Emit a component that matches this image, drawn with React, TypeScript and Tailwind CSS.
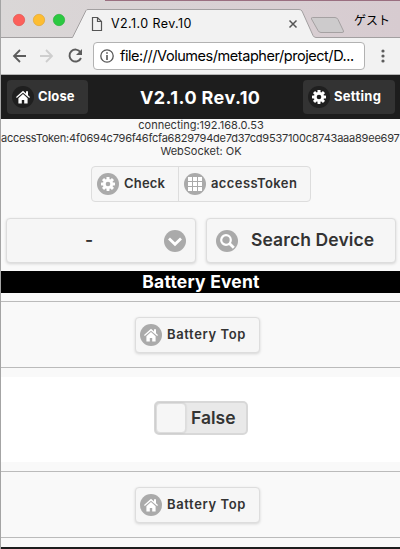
import React from "react";

function HomeIcon() {
  return (
    <svg width="14" height="14" viewBox="0 0 14 14" fill="currentColor">
      <path d="M7 4 2.4 8.2V13.4h3.4V10h2.4v3.4h3.4V8.2Z" />
      <path d="M7 .8 0 7l.8 1L7 2.7 13.2 8l.8-1-2-1.8V1.2h-2v2.2Z" />
    </svg>
  );
}

function GearIcon() {
  return (
    <svg width="14" height="14" viewBox="-7 -7 14 14">
      <g fill="currentColor">
        {[0, 45, 90, 135].map((a) => (
          <rect key={a} x="-1.5" y="-7" width="3" height="14" rx=".4" transform={`rotate(${a})`} />
        ))}
      </g>
      <circle r="3.7" fill="none" stroke="currentColor" strokeWidth="2.8" />
      <circle r="2.3" className="fill-[var(--disc)]" />
    </svg>
  );
}

function GridIcon() {
  return (
    <svg width="14" height="14" viewBox="0 0 14 14" fill="currentColor">
      {[0, 5, 10].map((y) => [0, 5, 10].map((x) => <rect key={`${x}-${y}`} x={x} y={y} width="4" height="4" />))}
    </svg>
  );
}

function Disc({ dark = false, children }: { dark?: boolean; children: React.ReactNode }) {
  return (
    <span
      className={`flex size-[22px] shrink-0 items-center justify-center rounded-full text-white ${
        dark ? "bg-[#1f1f1f] [--disc:#1f1f1f]" : "bg-[#aaaaaa] [--disc:#aaaaaa]"
      }`}
    >
      {children}
    </span>
  );
}

function BatterySection() {
  return (
    <section className="flex h-[67px] items-start justify-center border-y border-[#bbbbbb] pt-[15px] pr-[6px]">
      <button className="flex h-9 w-[125px] items-center rounded-[4px] border border-[#dddddd] bg-[#f6f6f6] pl-1 shadow-[0_1px_3px_rgba(0,0,0,0.15)]">
        <Disc><HomeIcon /></Disc>
        <span className="ml-[5px] text-[13px] font-semibold tracking-[0.62px] whitespace-nowrap">Battery Top</span>
      </button>
    </section>
  );
}

function Browser() {
  return (
    <>
      <div className="relative h-[38px] bg-gradient-to-r from-[#dad7d7] to-[#d7cbd0]">
        <svg className="absolute inset-0" width="400" height="38">
          <path d="M105 0H400V1H105Z" fill="#9a6f80" />
          <path d="M0 37.5H72.5L86 10.5Q86.5 9.5 88 9.5H299Q301 9.5 302 11L313 35.5Q314 37.5 316 37.5H400V38H0Z" fill="#f2f2f2" />
          <path d="M0 37.5H72.5L86 10.5Q86.5 9.5 88 9.5H299Q301 9.5 302 11L313 35.5Q314 37.5 316 37.5H400" fill="none" stroke="#a3a0a1" />
          <path d="M312.5 17.5H335Q337 17.5 338 19.5L343.5 31Q344 32.5 342 32.5H321Q319 32.5 318 30.5L311.5 19Q311 17.5 312.5 17.5Z" fill="#cdcbcc" stroke="#a5a1a2" />
          <circle cx="19" cy="20" r="5.7" fill="#fc605b" stroke="#df4a45" strokeWidth=".6" />
          <circle cx="39" cy="20" r="5.7" fill="#fdbd32" stroke="#dfa128" strokeWidth=".6" />
          <circle cx="59" cy="20" r="5.7" fill="#2bc941" stroke="#22ab33" strokeWidth=".6" />
          <path d="M92.5 17.5h5l4 4v9h-9Zm5 0v4h4" fill="none" stroke="#555" strokeWidth="1.2" />
          <path d="m289.5 20.5 7 7m0-7-7 7" stroke="#555" strokeWidth="1.5" />
        </svg>
        <span className="absolute top-[14px] left-[111px] text-[12.5px] leading-5 tracking-[0.42px] whitespace-nowrap">V2.1.0 Rev.10</span>
        <span className="absolute top-[10px] left-[354px] font-['Noto_Sans_CJK_JP',sans-serif] text-[12px] leading-5 whitespace-nowrap">ゲスト</span>
      </div>
      <div className="flex h-[37px] items-center border-b border-[#b5b5b5] bg-[#f2f2f2] pl-[12px]">
        <svg width="15" height="16" viewBox="0 0 15 16" fill="none" stroke="#5c5c5c" strokeWidth="1.8"><path d="M14 8H2m6-6L2 8l6 6" /></svg>
        <svg className="ml-[13px]" width="15" height="16" viewBox="0 0 15 16" fill="none" stroke="#cecece" strokeWidth="1.8"><path d="M0 8h12M6 2l6 6-6 6" /></svg>
        <svg className="ml-[13px]" width="15" height="16" viewBox="0 0 15 16" fill="none" stroke="#5c5c5c" strokeWidth="1.9">
          <path d="M12.5 4.2A6 6 0 1 0 13 10" />
          <path d="M14 1v6H8Z" fill="#5c5c5c" stroke="none" />
        </svg>
        <div className="ml-[10px] flex h-7 w-[272px] items-center rounded-[4px] border border-[#b2b2b2] bg-white pl-[6px]">
          <svg className="shrink-0" width="14" height="14" viewBox="0 0 14 14"><circle cx="7" cy="7" r="6.2" fill="none" stroke="#555" strokeWidth="1.3" /><path d="M7 6v5M7 3.2v1.5" stroke="#555" strokeWidth="1.6" /></svg>
          <span className="ml-[6px] text-[14.5px] tracking-[-0.45px] whitespace-nowrap">file:///Volumes/metapher/project/D...</span>
        </div>
        <svg className="ml-[16px]" width="4" height="14" fill="#5c5c5c"><circle cx="2" cy="2" r="1.6" /><circle cx="2" cy="7" r="1.6" /><circle cx="2" cy="12" r="1.6" /></svg>
      </div>
    </>
  );
}

export default function App() {
  return (
    <div className="flex h-[549px] w-[400px] overflow-hidden bg-[#f9f9f9] font-['Inter','Liberation_Sans',sans-serif] text-[#333333]">
      <div className="w-px shrink-0 bg-[#a4a4a4]" />
      <main className="w-[399px] shrink-0 overflow-hidden">
        <div className="-ml-px text-black"><Browser /></div>
        <header className="flex h-11 items-center bg-[#1d1d1d] pl-[6px] font-bold text-white">
          <button className="flex h-[34px] w-[81px] items-center rounded-[4px] bg-[#333333] pl-[5px]">
            <Disc dark><HomeIcon /></Disc>
            <span className="ml-1 text-[13px] tracking-[0.1px]">Close</span>
          </button>
          <h1 className="ml-[52px] w-[121px] text-[18px] tracking-[0.4px] whitespace-nowrap">V2.1.0 Rev.10</h1>
          <button className="ml-[42px] flex h-[34px] w-[92px] items-center rounded-[4px] bg-[#333333] pl-[5px]">
            <Disc dark><GearIcon /></Disc>
            <span className="ml-1 text-[13px] tracking-[0.3px]">Setting</span>
          </button>
        </header>
        <div className="h-[47px] text-center text-[11px] leading-[13px] whitespace-nowrap">
          <p className="pl-px">connecting:192.168.0.53</p>
          <p className="text-left tracking-[-0.22px]">accessToken:4f0694c796f46fcfa6829794de7d37cd9537100c8743aaa89ee697</p>
          <p className="pl-px">WebSocket: OK</p>
        </div>
        <div className="ml-[90px] flex h-9 w-[220px] overflow-hidden rounded-[4px] border border-[#dddddd] bg-[#f6f6f6] text-[13px] font-semibold">
          <button className="flex w-[87px] items-center border-r border-[#dddddd] pl-[5px]">
            <Disc><GearIcon /></Disc><span className="ml-[5px] tracking-[0.2px]">Check</span>
          </button>
          <button className="flex flex-1 items-center pl-[5px]">
            <Disc><GridIcon /></Disc><span className="ml-[5px] tracking-[0.4px]">accessToken</span>
          </button>
        </div>
        <div className="mt-4 flex gap-[10px] pl-[5px] text-[17.5px] font-semibold">
          <button className="flex h-[45px] w-[190px] items-center rounded-[4px] border border-[#dddddd] bg-[#f6f6f6] pl-[78px] shadow-[0_1px_3px_rgba(0,0,0,0.15)]">
            <span className="w-[79px] text-left">-</span>
            <Disc><svg width="14" height="14" fill="none" stroke="currentColor" strokeWidth="2.8"><path d="m1 4.5 6 5.7 6-5.7" /></svg></Disc>
          </button>
          <button className="flex h-[45px] w-[190px] items-center rounded-[4px] border border-[#dddddd] bg-[#f6f6f6] pl-[9px] shadow-[0_1px_3px_rgba(0,0,0,0.15)]">
            <Disc><svg width="16" height="16" fill="none" stroke="currentColor"><circle cx="7" cy="7" r="4.8" strokeWidth="2.2" /><path d="m10.5 10.5 4.3 4.3" strokeWidth="2.8" /></svg></Disc>
            <span className="ml-[13px] tracking-[0.1px] whitespace-nowrap">Search Device</span>
          </button>
        </div>
        <h2 className="mt-2 mb-2 h-[22px] bg-black pl-px text-center text-[17.5px] leading-[22px] font-bold tracking-[0.2px] text-white">Battery Event</h2>
        <BatterySection />
        <div className="my-[9px] h-[85px] bg-white pt-[24px] pl-[153px]">
          <div className="flex h-[34px] w-[94px] items-center rounded-[5px] border-2 border-[#d8d8d8] bg-[#e9e9e9]">
            <span className="size-[30px] rounded-[4px] border border-[#dddddd] bg-[#f6f6f6] shadow-[0_0_2px_rgba(0,0,0,0.15)]" />
            <span className="ml-[5px] text-[17.5px] font-semibold">False</span>
          </div>
        </div>
        <BatterySection />
        <div className="mt-[9px] h-[2px] bg-[#1d1d1d]" />
      </main>
    </div>
  );
}
